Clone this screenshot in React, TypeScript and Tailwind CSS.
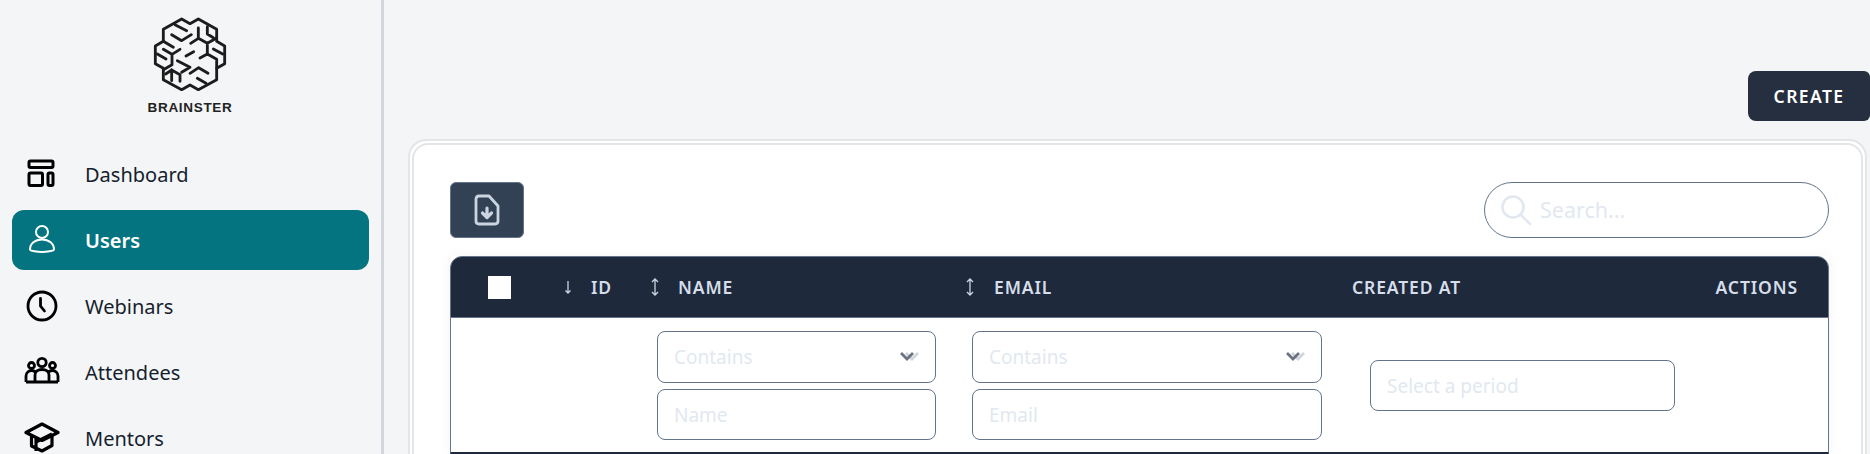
const navIcon = 'w-9 h-9 shrink-0'

function Logo() {
  return (
    <svg viewBox="450 40 240 240" className="w-20 h-20" fill="none" stroke="#1c1c1c" strokeWidth="8.5" strokeLinecap="round" strokeLinejoin="round">
      <path d="M545 55L570 69L595 55L650 86V122L674 136V189L650 203V237L595 267L570 253L545 267L490 237V203L466 189V136L490 122V86Z" />
      <path d="M525 72L560 90M515 102L545 120L574 102M490 122L520 140M490 146L516 161L540 146M516 161V192L490 207M472 160L498 175M558 166L581 153" />
      <path d="M595 82V113L572 128M595 113L622 128L650 112M622 78V100L640 111M622 128V160L600 172M622 160L650 176V203M640 145L668 160" />
      <path d="M532 180L570 200L545 215M570 218L596 201L624 218M592 233L618 248M515 208V240M515 208L497 220M515 208L540 222V242" />
    </svg>
  )
}

function DashboardIcon() {
  return (
    <svg viewBox="0 0 36 36" className={navIcon} fill="none" stroke="#000" strokeWidth="3">
      <rect x="5" y="5" width="24" height="6.5" rx="1.5" />
      <rect x="5" y="17" width="13.5" height="12.5" rx="1.5" />
      <rect x="24" y="17" width="5" height="12.5" rx="1.5" />
    </svg>
  )
}

function UserIcon() {
  return (
    <svg viewBox="0 0 36 36" className={navIcon} fill="none" stroke="#fff" strokeWidth="2">
      <circle cx="18" cy="10" r="6" />
      <path d="M6 27.5C6 21.5 11 17.5 18 17.5S30 21.5 30 27.5C30 29 22 30 18 30S6 29 6 27.5Z" />
    </svg>
  )
}

function ClockIcon() {
  return (
    <svg viewBox="0 0 36 36" className={navIcon} fill="none" stroke="#000" strokeWidth="2.8" strokeLinecap="round">
      <circle cx="18" cy="18" r="14" />
      <path d="M16.5 10.5V18L20.5 23" />
    </svg>
  )
}

function GroupIcon() {
  return (
    <svg viewBox="0 0 36 36" className={navIcon} fill="none" stroke="#000" strokeWidth="2.8">
      <circle cx="18" cy="8.5" r="4.2" />
      <circle cx="7.5" cy="11.5" r="3" />
      <circle cx="28.5" cy="11.5" r="3" />
      <path d="M2 28V22C2 18.5 5 16.5 7.5 16.5C9 16.5 10.5 17 11 18M34 28V22C34 18.5 31 16.5 28.5 16.5C27 16.5 25.5 17 25 18M11 28V21C11 17.5 14 15.5 18 15.5S25 17.5 25 21V28M2 28H34" />
    </svg>
  )
}

function CapIcon() {
  return (
    <svg viewBox="0 0 36 36" className={navIcon} fill="none" stroke="#000" strokeWidth="3.2" strokeLinejoin="round">
      <path d="M18 4L34 12.5L18 20.5L2 12.5Z" />
      <path d="M7.5 15.5V26L18 31L28 25.5V15.5M12 18L12 31M12 22L28 14" />
    </svg>
  )
}

function NavItem({ label, icon, active }: { label: string; icon: React.ReactNode; active?: boolean }) {
  return (
    <div className={active
      ? 'flex items-center gap-[25px] h-[60px] px-3 rounded-xl bg-[#047481] text-white font-semibold'
      : 'flex items-center gap-[25px] h-[60px] px-3 rounded-xl text-[#161e2e]'}>
      {icon}
      <span className="pt-[2px]">{label}</span>
    </div>
  )
}

function SortArrow({ both }: { both?: boolean }) {
  return (
    <svg viewBox="0 0 10 20" className="w-[10px] h-5 shrink-0" fill="none" stroke="#cbd5e1" strokeWidth="1.3">
      {both ? <path d="M5 2V18M2 5L5 2L8 5M2 15L5 18L8 15" /> : <path d="M5 4V16M2.5 13.5L5 16L7.5 13.5" />}
    </svg>
  )
}

function FilterSelect() {
  return (
    <div className="flex items-center justify-between h-[52px] pl-4 pr-[14px] rounded-lg border border-[#64748b] text-[#e2e8f0]">
      <span className="pt-[2px]">Contains</span>
      <svg viewBox="0 0 22 12" className="w-[22px] h-3" fill="none" strokeWidth="2.8">
        <path d="M7 2L13 8L19 2" stroke="#d1d5db" />
        <path d="M2 2L8 8L14 2" stroke="#6b7280" />
      </svg>
    </div>
  )
}

function FilterInput({ placeholder }: { placeholder: string }) {
  return (
    <div className="flex items-center h-[51px] pt-[2px] px-4 rounded-lg border border-[#64748b] text-[#e2e8f0]">
      {placeholder}
    </div>
  )
}

export default function App() {
  return (
    <div className="flex w-[1870px] h-[454px] overflow-hidden bg-[#f4f5f7] font-['Noto_Sans',sans-serif]">
      <aside className="w-[384px] shrink-0 border-r-[3px] border-[#d2d6dc] px-3 text-[20px]">
        <div className="flex flex-col items-center pr-[1px] pt-[14px] h-[144px]">
          <Logo />
          <span className="mt-[4px] text-[13.5px] leading-5 font-bold tracking-[0.05em] text-[#222] font-['Liberation_Sans',sans-serif]">BRAINSTER</span>
        </div>
        <nav className="flex flex-col gap-[6px] w-[357px]">
          <NavItem label="Dashboard" icon={<DashboardIcon />} />
          <NavItem label="Users" icon={<UserIcon />} active />
          <NavItem label="Webinars" icon={<ClockIcon />} />
          <NavItem label="Attendees" icon={<GroupIcon />} />
          <NavItem label="Mentors" icon={<CapIcon />} />
        </nav>
      </aside>

      <main className="flex-1 pt-[71px] pl-6 pr-[3px] min-w-0 text-[19px]">
        <div className="flex justify-end -mr-[3px]">
          <button className="w-[122px] h-[50px] rounded-l-lg rounded-r-md bg-[#252f3f] text-white text-[17.5px] font-semibold tracking-[0.08em]">CREATE</button>
        </div>
        <div className="mt-[18px] rounded-[18px] border-2 border-[#e3e5e9] bg-white p-[2px]">
          <div className="rounded-2xl border-2 border-[#e3e5e9] bg-white pl-[36px] pr-[32px] pt-[37px] h-[400px]">
            <div className="flex items-center justify-between h-[56px]">
              <button className="flex items-center justify-center w-[74px] h-[56px] rounded-md border border-[#64748b] bg-[#334155]">
                <svg viewBox="0 0 30 34" className="w-[30px] h-[34px]" fill="none" stroke="#cbd5e1" strokeWidth="2.8" strokeLinecap="round" strokeLinejoin="round">
                  <path d="M7 3H17L26 13V28C26 30 25 31 23 31H7C5 31 4 30 4 28V6C4 4 5 3 7 3Z" />
                  <path d="M15 15V24M10.5 20L15 24.5L19.5 20" strokeWidth="3.2" />
                </svg>
              </button>
              <div className="flex items-center gap-[8px] w-[345px] h-[56px] pl-[15px] rounded-full border border-[#64748b] text-[#e2e8f0] text-[21.5px]">
                <svg viewBox="0 0 32 32" className="w-8 h-8" fill="none" stroke="#e2e8f0" strokeWidth="2.6" strokeLinecap="round">
                  <circle cx="13" cy="13" r="10.5" />
                  <path d="M21 21L30 30" />
                </svg>
                <span>Search...</span>
              </div>
            </div>

            <div className="mt-[18px] shadow-[0_0_12px_rgba(0,0,0,0.05)]">
              <div className="grid grid-cols-[96px_92px_315px_382px_354px_138px] items-center h-[62px] rounded-t-xl border border-[#64748b] bg-[#1e293b] text-[#d5deea] text-[17.5px] font-semibold tracking-[0.05em]">
                <div className="flex justify-center">
                  <div className="w-[23px] h-[23px] bg-white" />
                </div>
                <div className="flex items-center gap-[18px] pl-[16px]"><SortArrow /> ID</div>
                <div className="flex items-center gap-[18px] pl-[11px]"><SortArrow both /> NAME</div>
                <div className="flex items-center gap-[19px] pl-[11px]"><SortArrow both /> EMAIL</div>
                <div className="pl-[16px]">CREATED AT</div>
                <div className="text-right pr-[30px]">ACTIONS</div>
              </div>
              <div className="grid grid-cols-[96px_92px_315px_382px_354px_138px] items-center h-[137px] border-x border-[#64748b] border-b-[3px] border-b-[#1e293b]">
                <div />
                <div />
                <div className="flex flex-col gap-[6px] pl-[18px] pr-[18px]">
                  <FilterSelect />
                  <FilterInput placeholder="Name" />
                </div>
                <div className="flex flex-col gap-[6px] pl-[18px] pr-[14px]">
                  <FilterSelect />
                  <FilterInput placeholder="Email" />
                </div>
                <div className="pl-[34px] pr-[15px]">
                  <FilterInput placeholder="Select a period" />
                </div>
                <div />
              </div>
            </div>
          </div>
        </div>
      </main>
    </div>
  )
}
